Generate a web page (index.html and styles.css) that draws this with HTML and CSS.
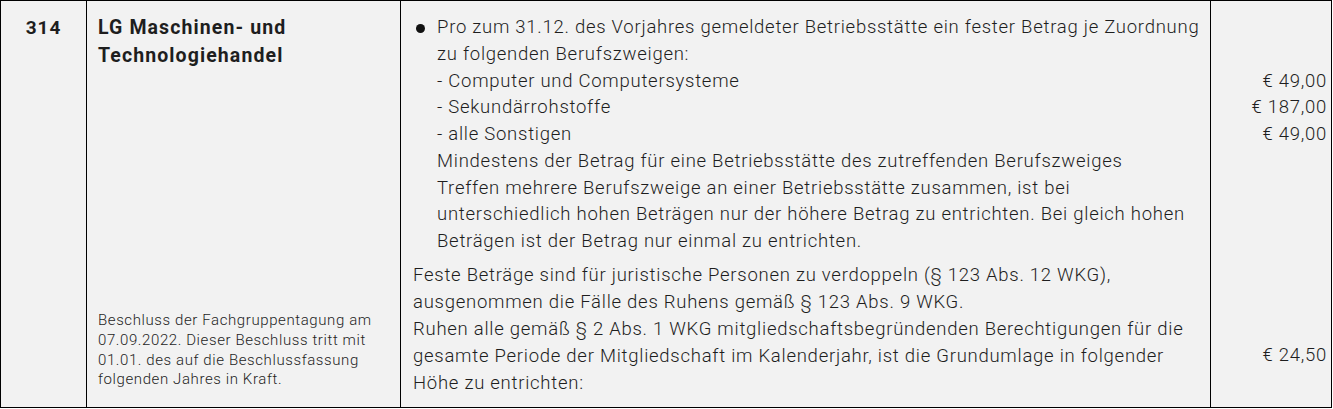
FILE: index.html
```html
<!DOCTYPE html>
<html lang="de">
<head>
<meta charset="utf-8">
<title>Grundumlage</title>
<link rel="stylesheet" href="styles.css">
</head>
<body>
<table class="fees">
  <colgroup>
    <col class="w-num">
    <col class="w-name">
    <col class="w-text">
    <col class="w-amt">
  </colgroup>
  <tr>
    <td class="c-num">314</td>
    <td class="c-name">
      <div class="name-wrap">
        <div class="title">LG Maschinen- und<br>Technologiehandel</div>
        <div class="note">Beschluss der Fachgruppentagung am<br>07.09.2022. Dieser Beschluss tritt mit<br>01.01. des auf die Beschlussfassung<br>folgenden Jahres in Kraft.</div>
      </div>
    </td>
    <td class="c-text">
      <ul class="bullets">
        <li>Pro zum 31.12. des Vorjahres gemeldeter Betriebsstätte ein fester Betrag je Zuordnung<br>zu folgenden Berufszweigen:<br>- Computer und Computersysteme<br>- Sekundärrohstoffe<br>- alle Sonstigen<br>Mindestens der Betrag für eine Betriebsstätte des zutreffenden Berufszweiges<br>Treffen mehrere Berufszweige an einer Betriebsstätte zusammen, ist bei<br>unterschiedlich hohen Beträgen nur der höhere Betrag zu entrichten. Bei gleich hohen<br>Beträgen ist der Betrag nur einmal zu entrichten.</li>
      </ul>
      <p class="para first">Feste Beträge sind für juristische Personen zu verdoppeln (§ 123 Abs. 12 WKG),<br>ausgenommen die Fälle des Ruhens gemäß § 123 Abs. 9 WKG.</p>
      <p class="para">Ruhen alle gemäß § 2 Abs. 1 WKG mitgliedschaftsbegründenden Berechtigungen für die<br>gesamte Periode der Mitgliedschaft im Kalenderjahr, ist die Grundumlage in folgender<br>Höhe zu entrichten:</p>
    </td>
    <td class="c-amt">
      <div class="amounts">
        <div class="amt gap2">€ 49,00</div>
        <div class="amt">€ 187,00</div>
        <div class="amt">€ 49,00</div>
        <div class="amt last">€ 24,50</div>
      </div>
    </td>
  </tr>
</table>
</body>
</html>
```

FILE: styles.css
```css
html, body {
  margin: 0;
  padding: 0;
  background: #ffffff;
}

body {
  font-family: Roboto, "Liberation Sans", sans-serif;
  color: #1e1e1e;
}

.fees {
  border-collapse: collapse;
  table-layout: fixed;
  width: 1331px;
  height: 408px;
  background: #f2f2f2;
}

.w-num { width: 86px; }
.w-name { width: 314px; }
.w-text { width: 810px; }
.w-amt { width: 121px; }

.fees td {
  border: 1px solid #000;
  vertical-align: top;
  padding: 0;
}

.c-num {
  text-align: center;
  font-weight: 700;
  font-size: 19px;
  letter-spacing: 1px;
  line-height: 28px;
  padding-top: 13px !important;
}

.c-name {
  height: 406px;
}

.name-wrap {
  display: flex;
  flex-direction: column;
  justify-content: space-between;
  height: 100%;
  box-sizing: border-box;
  padding: 13px 6px 17px 11px;
}

.title {
  font-weight: 700;
  font-size: 19.5px;
  letter-spacing: 1.1px;
  line-height: 28px;
}

.note {
  font-size: 15px;
  font-weight: 300;
  letter-spacing: 0.6px;
  line-height: 19.7px;
}

.c-text {
  font-size: 18.5px;
  font-weight: 300;
  letter-spacing: 0.74px;
  line-height: 26.75px;
  padding: 13px 4px 0 12px !important;
}

.bullets {
  margin: 0;
  padding: 0 0 0 24px;
  list-style: none;
}

.bullets li {
  position: relative;
}

.bullets li::before {
  content: "";
  position: absolute;
  left: -21px;
  top: 10px;
  width: 9px;
  height: 9px;
  border-radius: 50%;
  background: #111;
}

.para {
  margin: 0;
}

.para.first {
  margin-top: 7px;
  margin-bottom: 1px;
}

.c-amt {
  font-size: 18.5px;
  font-weight: 300;
  letter-spacing: 0.74px;
  line-height: 26.75px;
  text-align: right;
  padding: 13px 4px 0 0 !important;
}

.amt.gap2 {
  margin-top: 53.5px;
}

.amt.last {
  margin-top: 194px;
}
```
